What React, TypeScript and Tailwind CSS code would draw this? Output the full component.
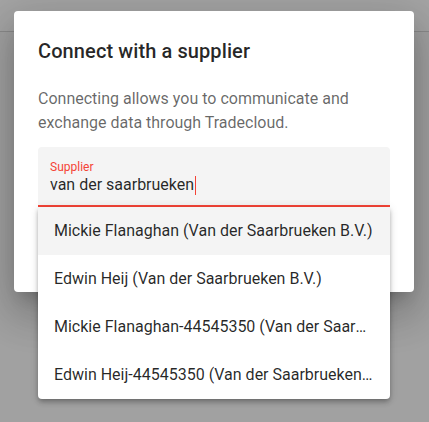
const suggestions = [
  'Mickie Flanaghan (Van der Saarbrueken B.V.)',
  'Edwin Heij (Van der Saarbrueken B.V.)',
  'Mickie Flanaghan-44545350 (Van der Saarbrueken B.V.)',
  'Edwin Heij-44545350 (Van der Saarbrueken B.V.)',
];

export default function App() {
  return (
    <div
      className="relative h-[422px] w-full overflow-hidden bg-[#a1a1a1]"
      style={{ fontFamily: 'Roboto, "Liberation Sans", sans-serif' }}
    >
      <div className="h-[32px] border-b border-[#8a8a8a] bg-[#a4a4a4]" />

      <div className="absolute left-[14px] top-[11px] h-[281px] w-[400px] rounded bg-white p-6 shadow-[0_11px_15px_-7px_rgba(0,0,0,0.2),0_24px_38px_3px_rgba(0,0,0,0.14),0_9px_46px_8px_rgba(0,0,0,0.12)]">
        <h2 className="mb-5 text-[20px] font-medium leading-8 tracking-[0.1px] text-black/85">
          Connect with a supplier
        </h2>
        <p className="text-base leading-6 text-black/60">
          Connecting allows you to communicate and exchange data through Tradecloud.
        </p>

        <div className="relative mt-3">
          <div className="h-[60px] rounded-t bg-[#f4f4f4] px-3 pt-[12px]">
            <div className="text-[12px] leading-4 text-[#f44336]">Supplier</div>
            <div className="flex items-center text-base leading-5 text-black/85">
              <span>van der saarbrueken</span>
              <span className="ml-px inline-block h-[19px] w-px bg-[#f44336]" />
            </div>
          </div>
          <div className="absolute bottom-0 left-0 right-0 h-[2px] bg-[#f44336]" />

          <ul className="absolute left-0 right-0 top-full z-10 rounded-b bg-white shadow-[0_2px_4px_-1px_rgba(0,0,0,0.2),0_4px_5px_0_rgba(0,0,0,0.14),0_1px_10px_0_rgba(0,0,0,0.12)]">
            {suggestions.map((name, i) => (
              <li
                key={name}
                className={`flex h-12 items-center px-4 text-base text-black/85 ${
                  i === 0 ? 'bg-[#f4f4f4]' : ''
                }`}
              >
                <span className="truncate">{name}</span>
              </li>
            ))}
          </ul>
        </div>
      </div>
    </div>
  );
}
